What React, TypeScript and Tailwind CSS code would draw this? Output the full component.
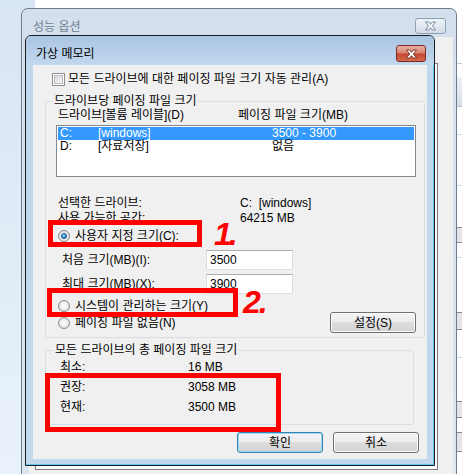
import React from "react";

// Win7 basic-theme widgets
function Checkbox() {
  return (
    <span className="flex h-[13px] w-[13px] shrink-0 items-center justify-center border border-[#8e8f8f] bg-white">
      <span className="h-[9px] w-[9px] border border-[#b8bcc2] bg-gradient-to-br from-[#d6d9de] to-[#f7f7f7]" />
    </span>
  );
}

function Radio({ checked = false }: { checked?: boolean }) {
  return (
    <span className="flex h-[12px] w-[12px] shrink-0 items-center justify-center rounded-full border border-[#8b8d90] bg-[radial-gradient(circle_at_50%_50%,#f6f6f6_30%,#cfd1d4_100%)]">
      {checked && (
        <span className="h-[6px] w-[6px] rounded-full border border-[#1b4f86] bg-[radial-gradient(circle_at_40%_35%,#bfeaff_0%,#3ea3e8_45%,#1463ad_100%)]" />
      )}
    </span>
  );
}

function WinButton({
  children,
  focused = false,
  className = "",
}: {
  children: React.ReactNode;
  focused?: boolean;
  className?: string;
}) {
  return (
    <button
      className={`flex h-[21px] w-[86px] shrink-0 items-center justify-center rounded-[3px] border bg-[linear-gradient(to_bottom,#f4f4f4_0%,#ececec_45%,#dedede_50%,#d2d2d2_100%)] text-[12px] leading-[14px] text-black ${
        focused
          ? "border-[#3c7fb1] shadow-[inset_0_0_0_1px_#8fdcf8]"
          : "border-[#707070] shadow-[inset_0_0_0_1px_#fbfbfb]"
      } ${className}`}
    >
      {children}
    </button>
  );
}

function XGlyph({ fill, stroke }: { fill: string; stroke: string }) {
  return (
    <svg width="13" height="10" viewBox="0 0 13 10">
      <path
        d="M1.5 1h3.2l1.8 2.3L8.3 1h3.2L8.4 5l3.1 4H8.3L6.5 6.7 4.7 9H1.5l3.1-4z"
        fill={fill}
        stroke={stroke}
        strokeWidth="0.9"
        strokeLinejoin="round"
      />
    </svg>
  );
}

function TextBox({ value }: { value: string }) {
  return (
    <div className="flex h-[20px] w-[87px] items-center border border-[#dadde2] border-t-[#abadb3] bg-white pl-[3px] leading-[14px]">
      {value}
    </div>
  );
}

function GroupBox({
  title,
  legendShift,
  className = "",
  children,
}: {
  title: string;
  legendShift: string;
  className?: string;
  children: React.ReactNode;
}) {
  return (
    <fieldset
      className={`ml-[12px] w-[369px] rounded-[3px] border border-[#d5dfe5] pl-[10px] pr-[8px] ${className}`}
    >
      <legend className={`${legendShift} px-[1px] text-[12px] leading-[14px]`}>{title}</legend>
      {children}
    </fieldset>
  );
}

export default function App() {
  return (
    <div className="relative h-[474px] w-[462px] overflow-hidden bg-gradient-to-b from-[#d8e5f3] to-[#e9f2fb] font-['Liberation_Sans','Noto_Sans_CJK_KR',sans-serif] text-[12px] text-black">
      {/* window further back */}
      <div className="absolute left-[35px] top-0 h-[474px] w-[427px] bg-white">
        <div className="absolute left-[421px] top-[63px] h-px w-[6px] bg-[#c9ced4]" />
        <div className="absolute left-[421px] top-[77px] h-[30px] w-[6px] border-b border-[#b9c2cc] bg-gradient-to-b from-[#eef2f7] to-[#d8dfe7]" />
        <div className="absolute left-[421px] top-[134px] h-px w-[6px] bg-[#d4d8dd]" />
        <div className="absolute left-[421px] top-[185px] h-px w-[6px] bg-[#d4d8dd]" />
        <div className="absolute left-[421px] top-[227px] h-[16px] w-[6px] border-y border-l border-[#8a8a8a] bg-[#e4e4e4]" />
        <div className="absolute left-[421px] top-[257px] h-px w-[6px] bg-[#d4d8dd]" />
        <div className="absolute left-[421px] top-[312px] h-[18px] w-[6px] border-y border-l border-[#8a8a8a] bg-[#e4e4e4]" />
        <div className="absolute left-[421px] top-[357px] h-px w-[6px] bg-[#d4d8dd]" />
        <div className="absolute left-[421px] top-[401px] h-[17px] w-[6px] border-y border-l border-[#8a8a8a] bg-[#e4e4e4]" />
        <div className="absolute left-[421px] top-[432px] h-[20px] w-[6px] border-y border-l border-[#8a8a8a] bg-[#e4e4e4]" />
      </div>

      {/* 성능 옵션 (inactive) */}
      <div className="absolute left-[21px] top-[8px] flex h-[480px] w-[436px] flex-col rounded-t-[7px] border border-[#6f7c8a] bg-gradient-to-b from-[#d3dfec] to-[#dbe7f3]">
        <div className="flex h-[28px] shrink-0 items-start justify-between">
          <span className="ml-[11px] mt-[11px] leading-[14px] text-[#728191]">성능 옵션</span>
          <div className="mr-[10px] mt-[9px] flex h-[16px] w-[31px] items-center justify-center rounded-[3px] border border-[#8d9fb3] bg-gradient-to-b from-[#eef3f8] to-[#d3dde8]">
            <XGlyph fill="#f5f7fa" stroke="#72839a" />
          </div>
        </div>
        <div className="ml-[7px] mr-[3px] flex-1 bg-[#f0f0f0]">
          <div className="ml-[6px] mt-[26px] h-[407px] w-[403px] border border-[#7d7d7d] bg-[#fcfcfc]" />
        </div>
      </div>

      {/* 가상 메모리 dialog */}
      <div className="absolute left-[25px] top-[35px] flex h-[431px] w-[410px] flex-col rounded-t-[6px] border border-[#1c1c1c] bg-[#c2d8ee] shadow-[inset_-1px_-1px_0_#5cc8ee]">
        <div className="flex h-[29px] shrink-0 items-start justify-between rounded-t-[5px] bg-gradient-to-b from-[#aac5e3] to-[#c2d8ee]">
          <span className="ml-[10px] mt-[11px] leading-[14px]">가상 메모리</span>
          <div className="mr-[8px] mt-[9px] flex h-[17px] w-[30px] items-center justify-center rounded-[3px] border border-[#782c24] bg-[linear-gradient(to_bottom,#eab0a2_0%,#d98470_48%,#c5472f_52%,#d56a4f_100%)]">
            <XGlyph fill="#ffffff" stroke="#6e2a22" />
          </div>
        </div>

        <div className="mx-[7px] mb-[6px] flex flex-1 flex-col bg-[#f0f0f0]">
          {/* auto manage */}
          <div className="mt-[7px] flex h-[14px] items-center pl-[19px]">
            <Checkbox />
            <span className="ml-[3px] leading-[14px]">모든 드라이브에 대한 페이징 파일 크기 자동 관리(A)</span>
          </div>

          <GroupBox title="드라이브당 페이징 파일 크기" legendShift="-ml-[3px]" className="mt-[8px] pb-[4px]">
            <div className="flex h-[14px] items-center pl-[2px] leading-[14px]">
              <span className="w-[180px]">드라이브[볼륨 레이블](D)</span>
              <span>페이징 파일 크기(MB)</span>
            </div>

            <div className="mt-[3px] h-[52px] w-[360px] border border-[#828790] bg-white p-[1px]">
              <div className="flex h-[13px] items-center bg-[#3399ff] pl-[2px] leading-[13px] text-white">
                <span className="w-[38px]">C:</span>
                <span className="w-[174px]">[windows]</span>
                <span>3500 - 3900</span>
              </div>
              <div className="flex h-[13px] items-center pl-[2px] leading-[13px]">
                <span className="w-[38px]">D:</span>
                <span className="w-[174px]">[자료저장]</span>
                <span>없음</span>
              </div>
            </div>

            <div className="mt-[18px] flex h-[15px] items-center pl-[2px] leading-[14px]">
              <span className="w-[182px]">선택한 드라이브:</span>
              <span>C:&nbsp;&nbsp;[windows]</span>
            </div>
            <div className="flex h-[15px] items-center pl-[2px] leading-[14px]">
              <span className="w-[182px]">사용 가능한 공간:</span>
              <span>64215 MB</span>
            </div>

            <div className="mt-[4px] flex h-[14px] items-center gap-[5px] pl-[2px] leading-[14px]">
              <Radio checked />
              <span>사용자 지정 크기(C):</span>
            </div>

            <div className="mt-[7px] flex h-[20px] items-center pl-[6px] leading-[14px]">
              <span className="w-[144px]">처음 크기(MB)(I):</span>
              <TextBox value="3500" />
            </div>
            <div className="mt-[4px] flex h-[20px] items-center pl-[6px] leading-[14px]">
              <span className="w-[144px]">최대 크기(MB)(X):</span>
              <TextBox value="3900" />
            </div>

            <div className="mt-[5px] flex items-start">
              <div className="flex flex-col gap-[3px] pl-[2px]">
                <div className="flex h-[14px] items-center gap-[5px] leading-[14px]">
                  <Radio />
                  <span>시스템이 관리하는 크기(Y)</span>
                </div>
                <div className="flex h-[14px] items-center gap-[5px] leading-[14px]">
                  <Radio />
                  <span>페이징 파일 없음(N)</span>
                </div>
              </div>
              <WinButton className="ml-auto mt-[13px]">설정(S)</WinButton>
            </div>
          </GroupBox>

          <GroupBox title="모든 드라이브의 총 페이징 파일 크기" legendShift="-ml-[2px]" className="mt-[5px] pb-[7px]">
            {[
              ["최소:", "16 MB"],
              ["권장:", "3058 MB"],
              ["현재:", "3500 MB"],
            ].map(([label, value]) => (
              <div key={label} className="flex h-[20px] items-center pl-[4px] leading-[14px]">
                <span className="w-[128px]">{label}</span>
                <span>{value}</span>
              </div>
            ))}
          </GroupBox>

          <div className="mt-[7px] flex justify-end gap-[10px] pr-[8px]">
            <WinButton focused>확인</WinButton>
            <WinButton>취소</WinButton>
          </div>
        </div>
      </div>

      {/* red annotations drawn over the screenshot */}
      <div className="absolute left-[48px] top-[220px] h-[27px] w-[154px] border-[5px] border-[#ff0000]" />
      <div className="absolute left-[47px] top-[288px] h-[29px] w-[191px] border-[5px] border-[#ff0000]" />
      <div className="absolute left-[45px] top-[373px] h-[59px] w-[236px] border-[5px] border-[#ff0000]" />
      <span className="absolute left-[214px] top-[218px] text-[32px] font-bold italic leading-[32px] tracking-[-3px] text-[#ff0000]">1.</span>
      <span className="absolute left-[243px] top-[286px] text-[32px] font-bold italic leading-[32px] tracking-[-2px] text-[#ff0000]">2.</span>
    </div>
  );
}
